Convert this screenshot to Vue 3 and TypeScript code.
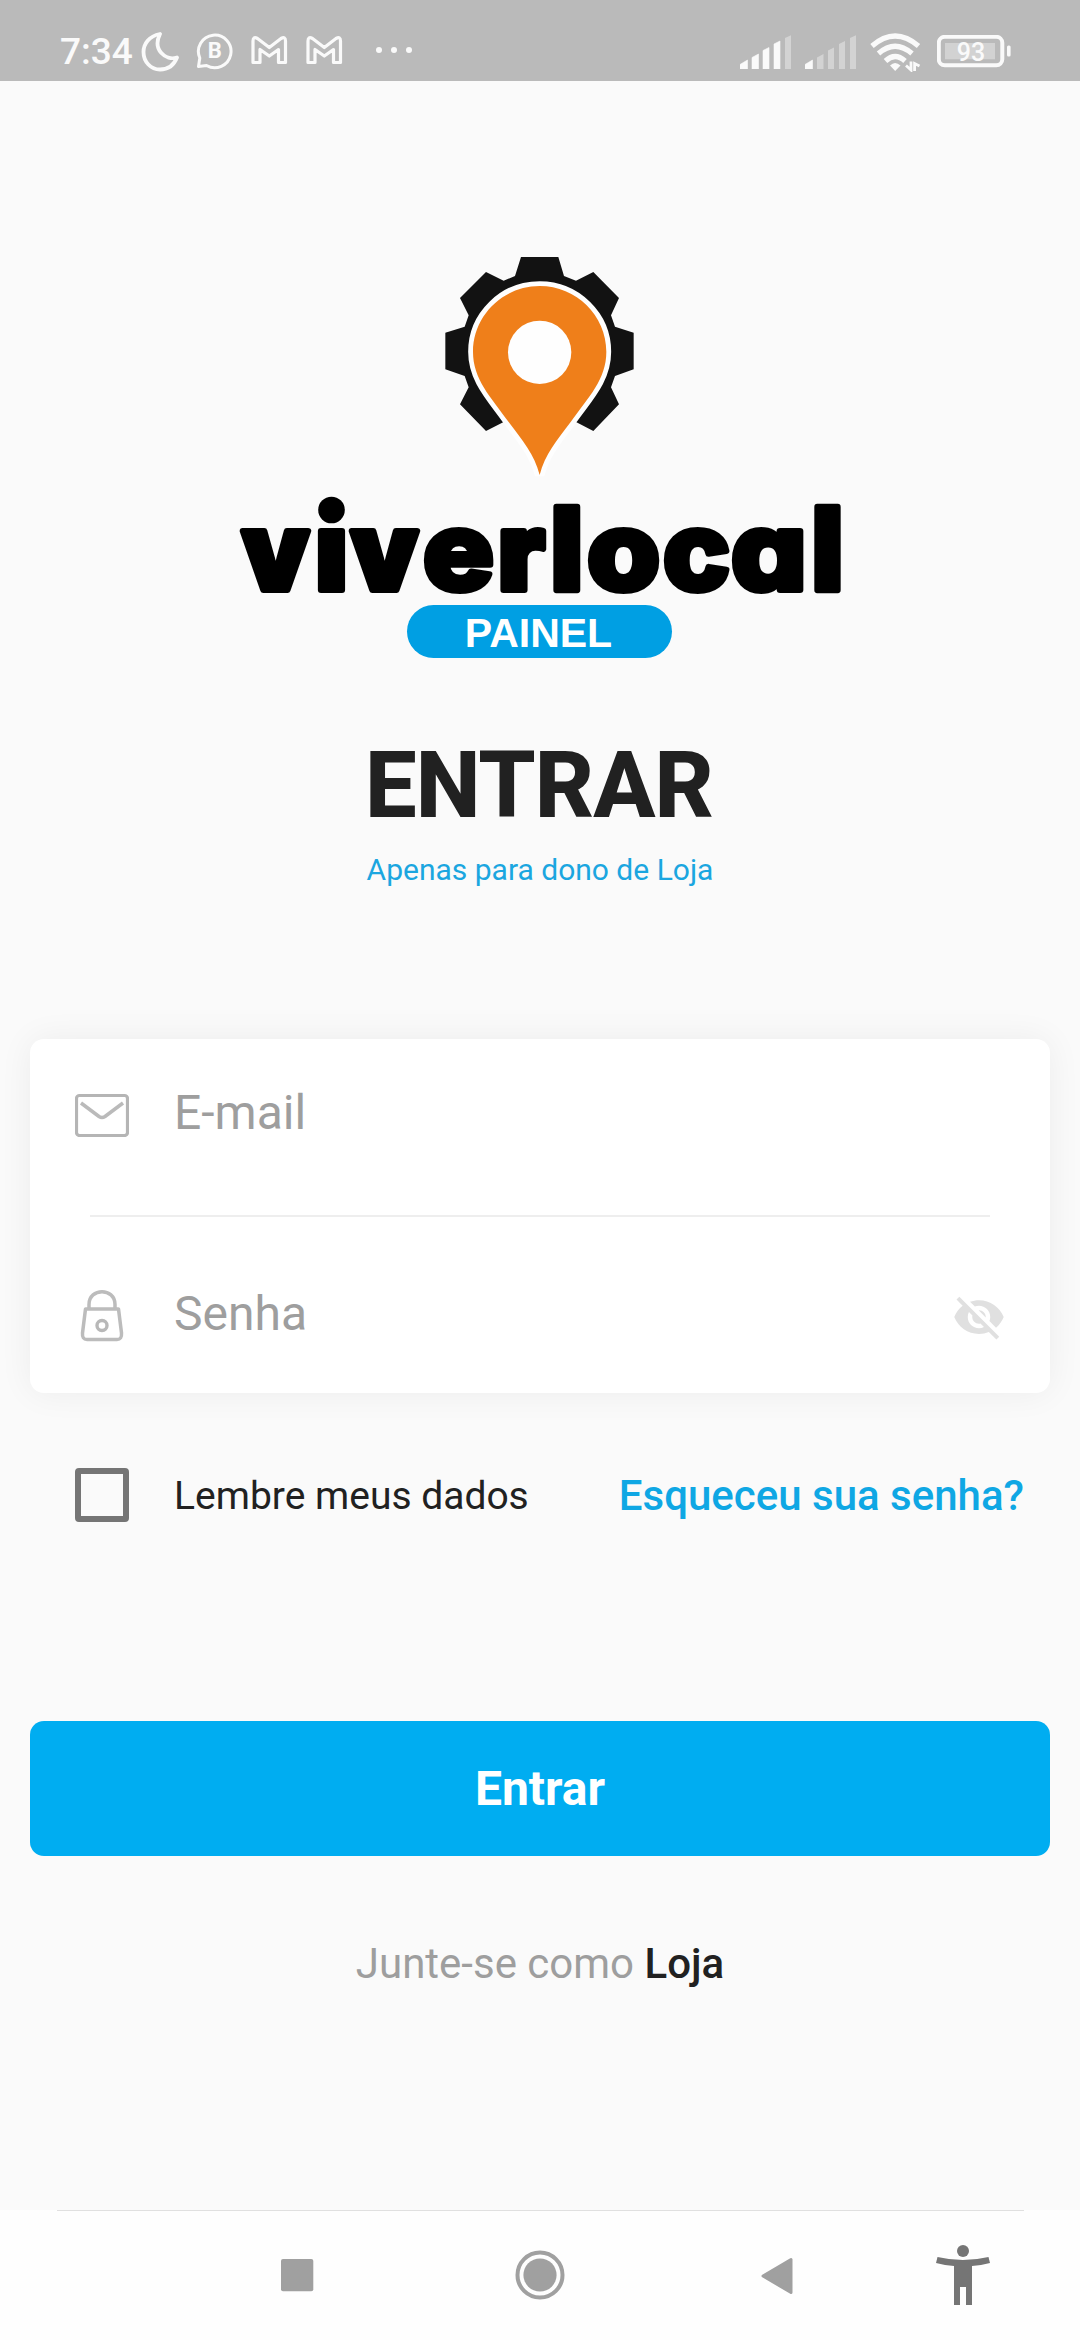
<script setup lang="ts">
interface Glyph {
  char: string
  x: number
  weight: number
  sx: number
  sy: number
}

const wordmark: Glyph[] = [
  { char: 'v', x: 242, weight: 900, sx: 0.98, sy: 1 },
  { char: 'i', x: 315.4, weight: 900, sx: 1, sy: 1 },
  { char: 'v', x: 351, weight: 900, sx: 0.98, sy: 1 },
  { char: 'e', x: 423, weight: 800, sx: 1.095, sy: 1 },
  { char: 'r', x: 498, weight: 900, sx: 1, sy: 1 },
  { char: 'l', x: 551, weight: 900, sx: 0.99, sy: 1.051 },
  { char: 'o', x: 587, weight: 800, sx: 1.095, sy: 1 },
  { char: 'c', x: 663, weight: 800, sx: 1.045, sy: 1 },
  { char: 'a', x: 731, weight: 800, sx: 1.1, sy: 1 },
  { char: 'l', x: 812, weight: 900, sx: 0.97, sy: 1.051 },
]

const signals: number[] = [4, 1]
const bars: string[] = [
  'M0 29.5L7.5 25V34H0Z',
  'M12 22.500L18.500 19V34H12Z',
  'M23 15.500L29 12.500V34H23Z',
  'M34 9L40 6V34H34Z',
  'M45 3L51 .3V34H45Z',
]
</script>

<template>
  <div class="screen">
    <header class="status">
      <span class="time">7:34</span>
      <svg class="moon" width="38" height="40" viewBox="141 32 38 40">
        <path d="M160 34C149 36 143.500 44 143.500 52C143.500 62 151 69.500 160 69.500C168 69.500 174 65 177 57.500C166 61 152 50 160 34Z" fill="none" stroke="#fafafa" stroke-width="3.800" stroke-linejoin="round" />
      </svg>
      <svg class="bubble" width="38" height="38" viewBox="196 32 38 38">
        <path d="M198.500 66.500L199.800 58A16.300 16.300 0 1 1 206.500 65.500Z" fill="none" stroke="#fafafa" stroke-width="3" stroke-linejoin="round" />
        <text x="214.700" y="58.300" text-anchor="middle" class="bubble-letter">B</text>
      </svg>
      <svg v-for="n in 2" :key="n" class="mail-app" width="38" height="30" viewBox="0 0 38 30">
        <path d="M2 26.500V5Q2 0 6.500 2.500L18.300 11.500L30 2.500Q34.500 0 34.500 5V26.500H27.500V13.500L18.300 20L9 13.500V26.500Z" fill="none" stroke="#fafafa" stroke-width="3.200" stroke-linejoin="round" />
      </svg>
      <span class="more"><i v-for="n in 3" :key="n"></i></span>
      <span class="grow"></span>
      <svg v-for="level in signals" :key="level" class="signal" width="51" height="34" viewBox="0 0 51 34">
        <path v-for="(bar, i) in bars" :key="i" :d="bar" fill="#fafafa" :fill-opacity="i < level ? 1 : 0.4" stroke="#fafafa" :stroke-opacity="i < level ? 1 : 0" stroke-width=".6" stroke-linejoin="round" />
      </svg>
      <svg class="wifi" width="51" height="39" viewBox="870 33 51 39">
        <g fill="none" stroke="#fafafa" stroke-width="5.200">
          <path d="M872 46Q895 26 918.500 46" />
          <path d="M878.500 53.500Q895 39 912 53.500" />
          <path d="M885.500 61Q895 52 905 61" />
        </g>
        <path d="M890 65.500Q895 60.500 900.500 65.500L895.200 71Z" fill="#fafafa" />
        <path d="M911 61.500V70L906 65.500M914.600 71V63.500L919.500 66" fill="none" stroke="#fafafa" stroke-width="2.800" />
      </svg>
      <svg class="battery" width="75" height="33" viewBox="937 35 75 33">
        <rect x="938.800" y="36.800" width="63.500" height="28.500" rx="6" fill="none" stroke="#fafafa" stroke-width="4" />
        <rect x="945" y="43" width="50" height="16.300" fill="#fafafa" fill-opacity=".38" />
        <rect x="1007" y="45.500" width="3.600" height="11" rx="1.500" fill="#fafafa" />
        <text x="971" y="60.800" text-anchor="middle" class="charge">93</text>
      </svg>
    </header>

    <main class="page">
      <svg class="logo" width="620" height="415" viewBox="230 250 620 415">
        <g transform="translate(420 240) scale(.33333)">
          <path d="M303 51H415L432 108L468 122L520 96L597 174L573 226L585 260L641 278V388L585 408L573 442L597 493L520 573L468 546H251L198 573L120 493L146 442L134 408L76 388V278L134 260L146 226L120 174L198 96L251 122L285 108Z" fill="#121212" />
          <path d="M359 138C469 138 559 227 559 335C559 418 506 470 452 546C410 602 375 642 359 705C343 642 308 602 266 546C212 470 159 418 159 335C159 227 249 138 359 138Z" fill="#fefefe" stroke="#fefefe" stroke-width="29" />
          <path d="M359 138C469 138 559 227 559 335C559 418 506 470 452 546C410 602 375 642 359 705C343 642 308 602 266 546C212 470 159 418 159 335C159 227 249 138 359 138Z" fill="#ef7f1a" />
          <circle cx="359" cy="337" r="95" fill="#fefefe" />
        </g>
        <g class="wordmark">
          <text v-for="(g, i) in wordmark" :key="i" :font-weight="g.weight" :transform="`translate(${g.x} 590) scale(${g.sx} ${g.sy})`">{{ g.char }}</text>
        </g>
        <!-- raised round dot of the i -->
        <path d="M315 500H348V528H315Z" fill="#fafafa" />
        <circle cx="331.500" cy="510" r="13.300" />
        <rect x="407" y="605" width="265" height="53" rx="26.500" fill="#009fe3" />
        <text x="538.500" y="646.800" text-anchor="middle" class="panel">PAINEL</text>
      </svg>

      <h1>ENTRAR</h1>
      <p class="subtitle">Apenas para dono de Loja</p>

      <section class="card">
        <label class="field">
          <svg class="icon" width="54" height="44" viewBox="75 1093 54 44">
            <rect x="76.500" y="1095.500" width="51" height="40" rx="3" fill="none" stroke="#b5b5b5" stroke-width="3.200" />
            <path d="M81 1103L99 1116.500Q102 1118.500 105 1116.500L123 1103" fill="none" stroke="#bababa" stroke-width="3.500" />
          </svg>
          <span class="hint">E-mail</span>
        </label>
        <hr />
        <label class="field password">
          <svg class="icon" width="54" height="54" viewBox="75 1289 54 54">
            <path d="M89 1308V1304.500C89 1287.500 115 1287.500 115 1304.500V1308M85.500 1309H118.500L121.500 1333Q122 1339.500 117 1339.500H87Q82 1339.500 82.500 1333Z" fill="none" stroke="#bcbcbc" stroke-width="3.500" stroke-linejoin="round" />
            <circle cx="102" cy="1325.500" r="5" fill="none" stroke="#b8b8b8" stroke-width="3.400" />
          </svg>
          <span class="hint">Senha</span>
          <svg class="eye" width="54" height="54" viewBox="0 0 24 24">
            <path fill="#e0e0e0" d="M12 7c2.760 0 5 2.240 5 5 0 .65-.13 1.260-.36 1.830l2.920 2.920c1.510-1.260 2.700-2.890 3.430-4.750-1.730-4.390-6-7.500-11-7.500-1.400 0-2.740.25-3.980.7l2.160 2.160C10.740 7.130 11.350 7 12 7zM2 4.270l2.280 2.280.46.46C3.080 8.300 1.780 10.020 1 12c1.730 4.390 6 7.500 11 7.500 1.550 0 3.030-.3 4.380-.84l.42.42L19.730 22 21 20.730 3.270 3 2 4.270zM7.530 9.800l1.550 1.550c-.05.21-.08.43-.08.65 0 1.660 1.340 3 3 3 .22 0 .44-.03.65-.08l1.550 1.550c-.67.33-1.410.53-2.200.53-2.760 0-5-2.240-5-5 0-.79.2-1.530.53-2.200zm4.310-.78l3.150 3.150.02-.16c0-1.660-1.340-3-3-3l-.17.010z" />
          </svg>
        </label>
      </section>

      <div class="options">
        <span class="checkbox"></span>
        <span class="remember">Lembre meus dados</span>
        <a class="forgot">Esqueceu sua senha?</a>
      </div>

      <button class="submit">Entrar</button>
      <p class="join">Junte-se como <b>Loja</b></p>
    </main>

    <nav class="navbar">
      <svg class="recent" width="34" height="34" viewBox="0 0 34 34"><rect x="1" y="1" width="32.300" height="32.300" rx="2" fill="#a0a0a0" /></svg>
      <svg class="home" width="50" height="50" viewBox="0 0 50 50">
        <circle cx="25" cy="25" r="22.500" fill="none" stroke="#a0a0a0" stroke-width="4" />
        <circle cx="25" cy="25" r="16.600" fill="#a0a0a0" />
      </svg>
      <svg class="back" width="32" height="38" viewBox="0 0 32 38"><path d="M2 19L30 2.500V35.500Z" fill="#a0a0a0" stroke="#a0a0a0" stroke-width="3" stroke-linejoin="round" /></svg>
      <svg class="access" width="54" height="60" viewBox="0 0 54 60">
        <circle cx="27" cy="6" r="6" fill="#757575" />
        <path d="M1.500 12Q27 18 52.500 12L54 18Q45 20.500 36 21V60H30V42H24V60H18V21Q9 20.500 0 18Z" fill="#757575" />
      </svg>
    </nav>
  </div>
</template>

<style>
body {
  margin: 0;
  background: #fafafa;
}
</style>

<style scoped>
.screen {
  width: 1080px;
  height: 2340px;
  display: flex;
  flex-direction: column;
  background: #fafafa;
  font-family: Roboto, "Liberation Sans", sans-serif;
  overflow: hidden;
}

svg {
  display: block;
  flex: none;
}

.status {
  box-sizing: border-box;
  height: 81px;
  padding: 32px 68px 0 60px;
  display: flex;
  align-items: flex-start;
  background: #bababa;
  color: #fafafa;
}

.time {
  width: 81px;
  font-size: 37px;
  font-weight: 500;
  line-height: 40px;
  white-space: nowrap;
}

.bubble {
  margin: 0 17px;
}

.bubble-letter {
  font-size: 22px;
  font-weight: 700;
  fill: #fafafa;
}

.mail-app {
  margin: 4px 17px 0 0;
}

.more {
  display: flex;
  gap: 9px;
  margin: 15px 0 0 15px;
}

.more i {
  width: 6px;
  height: 6px;
  border-radius: 50%;
  background: #fafafa;
}

.grow {
  flex: 1;
}

.signal {
  margin: 3px 14px 0 0;
}

.wifi {
  margin: 1px 16px 0 0;
}

.battery {
  margin-top: 3px;
}

.charge {
  font-size: 25px;
  font-weight: 500;
  fill: #fafafa;
}

.page {
  height: 2129px;
  display: flex;
  flex-direction: column;
  align-items: center;
}

.logo {
  margin-top: 169px;
}

.wordmark {
  font-family: Inter, sans-serif;
  font-size: 108px;
  font-feature-settings: "cv11";
  stroke: #000;
  stroke-width: 6px;
  stroke-linejoin: round;
}

.panel {
  font-family: "Liberation Sans", Arial, sans-serif;
  font-size: 41px;
  font-weight: 700;
  fill: #fff;
}

h1 {
  margin: 71px 0 0;
  padding-right: 2px;
  font-size: 92px;
  font-weight: 800;
  letter-spacing: -1px;
  line-height: 100px;
  color: #212121;
}

.subtitle {
  margin: 14px 0 0;
  font-size: 30px;
  line-height: 40px;
  color: #1ba6e0;
}

.card {
  box-sizing: border-box;
  width: 1020px;
  height: 354px;
  margin-top: 149px;
  border-radius: 14px;
  background: #fff;
  box-shadow: 0 0 34px rgba(0, 0, 0, 0.06);
}

.card hr {
  height: 2px;
  margin: 0 60px;
  border: 0;
  background: #eee;
}

.field {
  box-sizing: border-box;
  height: 176px;
  padding: 46px 43px 0 45px;
  display: flex;
  align-items: flex-start;
}

.field .icon {
  margin: 8px 45px 0 0;
}

.hint {
  flex: 1;
  font-size: 48px;
  line-height: 56px;
  color: #9e9e9e;
}

.password {
  padding-top: 69px;
}

.password .icon {
  margin-top: 3px;
}

.password .eye {
  margin: 4px 1px 0 0;
}

.options {
  width: 1020px;
  margin-top: 75px;
  display: flex;
  align-items: flex-start;
}

.checkbox {
  box-sizing: border-box;
  width: 54px;
  height: 54px;
  margin: 0 45px;
  border: 6px solid #757575;
  border-radius: 4px;
}

.remember {
  flex: 1;
  font-size: 39px;
  line-height: 56px;
  color: #212121;
}

.forgot {
  margin-right: 26px;
  font-size: 42px;
  font-weight: 500;
  line-height: 56px;
  color: #0fa7e4;
}

.submit {
  width: 1020px;
  height: 135px;
  margin-top: 197px;
  padding: 0;
  border: 0;
  border-radius: 14px;
  background: #00adf1;
  color: #fff;
  font: 700 48px/135px Roboto, sans-serif;
}

.join {
  margin: 81px 0 0;
  font-size: 42px;
  line-height: 54px;
  color: #9e9e9e;
}

.join b {
  font-weight: 500;
  color: #212121;
}

.navbar {
  box-sizing: border-box;
  height: 130px;
  padding: 0 90px 0 280px;
  display: flex;
  align-items: flex-start;
  background: linear-gradient(#e0e0e0, #e0e0e0) 57px 0 / 967px 1px no-repeat #fefefe;
}

.recent {
  margin-top: 48px;
}

.home {
  margin: 40px 0 0 201px;
}

.back {
  margin: 47px 0 0 196px;
}

.access {
  margin: 35px 0 0 143px;
}
</style>
